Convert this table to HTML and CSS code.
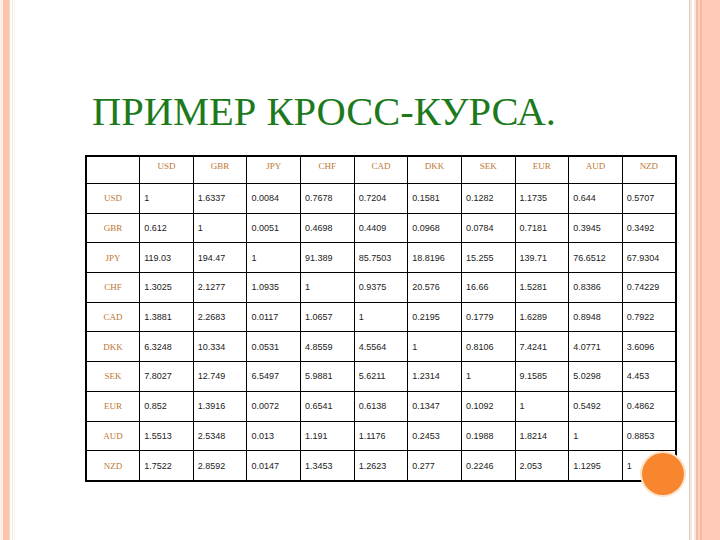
FILE: index.html
```html
<!DOCTYPE html>
<html lang="ru">
<head>
<meta charset="utf-8">
<title>Пример кросс-курса</title>
<link rel="stylesheet" href="styles.css">
</head>
<body>
<div class="slide">
  <h1 class="title">ПРИМЕР КРОСС-КУРСА.</h1>
  <div class="table-wrap">
    <table class="rates">
      <thead>
        <tr>
          <th></th><th>USD</th><th>GBR</th><th>JPY</th><th>CHF</th><th>CAD</th><th>DKK</th><th>SEK</th><th>EUR</th><th>AUD</th><th>NZD</th>
        </tr>
      </thead>
      <tbody>
        <tr><th>USD</th><td>1</td><td>1.6337</td><td>0.0084</td><td>0.7678</td><td>0.7204</td><td>0.1581</td><td>0.1282</td><td>1.1735</td><td>0.644</td><td>0.5707</td></tr>
        <tr><th>GBR</th><td>0.612</td><td>1</td><td>0.0051</td><td>0.4698</td><td>0.4409</td><td>0.0968</td><td>0.0784</td><td>0.7181</td><td>0.3945</td><td>0.3492</td></tr>
        <tr><th>JPY</th><td>119.03</td><td>194.47</td><td>1</td><td>91.389</td><td>85.7503</td><td>18.8196</td><td>15.255</td><td>139.71</td><td>76.6512</td><td>67.9304</td></tr>
        <tr><th>CHF</th><td>1.3025</td><td>2.1277</td><td>1.0935</td><td>1</td><td>0.9375</td><td>20.576</td><td>16.66</td><td>1.5281</td><td>0.8386</td><td>0.74229</td></tr>
        <tr><th>CAD</th><td>1.3881</td><td>2.2683</td><td>0.0117</td><td>1.0657</td><td>1</td><td>0.2195</td><td>0.1779</td><td>1.6289</td><td>0.8948</td><td>0.7922</td></tr>
        <tr><th>DKK</th><td>6.3248</td><td>10.334</td><td>0.0531</td><td>4.8559</td><td>4.5564</td><td>1</td><td>0.8106</td><td>7.4241</td><td>4.0771</td><td>3.6096</td></tr>
        <tr><th>SEK</th><td>7.8027</td><td>12.749</td><td>6.5497</td><td>5.9881</td><td>5.6211</td><td>1.2314</td><td>1</td><td>9.1585</td><td>5.0298</td><td>4.453</td></tr>
        <tr><th>EUR</th><td>0.852</td><td>1.3916</td><td>0.0072</td><td>0.6541</td><td>0.6138</td><td>0.1347</td><td>0.1092</td><td>1</td><td>0.5492</td><td>0.4862</td></tr>
        <tr><th>AUD</th><td>1.5513</td><td>2.5348</td><td>0.013</td><td>1.191</td><td>1.1176</td><td>0.2453</td><td>0.1988</td><td>1.8214</td><td>1</td><td>0.8853</td></tr>
        <tr><th>NZD</th><td>1.7522</td><td>2.8592</td><td>0.0147</td><td>1.3453</td><td>1.2623</td><td>0.277</td><td>0.2246</td><td>2.053</td><td>1.1295</td><td>1</td></tr>
      </tbody>
    </table>
    <span class="dot"></span>
  </div>
</div>
</body>
</html>
```

FILE: styles.css
```css
html, body {
  margin: 0;
  padding: 0;
}
body {
  width: 720px;
  height: 540px;
  overflow: hidden;
  background: #ffffff;
}
.slide {
  width: 720px;
  height: 540px;
  box-sizing: border-box;
  padding: 92px 0 0 85px;
  background:
    linear-gradient(to right,
      #fdeee8 0px, #fdeee8 3px,
      #fcc4ab 3px, #fcc4ab 9px,
      #f4d8d0 9px, #f4d8d0 10px,
      #ffffff 10px, #ffffff 12px,
      #efe9f4 12px, #efe9f4 13px,
      #ffffff 13px, #ffffff 14px,
      #fbf5de 14px, #fbf5de 15px,
      transparent 15px, transparent 689px,
      #e6cdbf 689px, #e6cdbf 690px,
      #f6e7de 690px, #f6e7de 692px,
      #ffffff 692px, #ffffff 694px,
      #f8e8d2 694px, #f8e8d2 696px,
      #f2bca6 696px, #f2bca6 698px,
      #ffd2c2 698px, #ffd2c2 700px,
      #f7b89f 700px, #f7b89f 702px,
      #ffcbb8 702px, #ffcbb8 720px);
}
.title {
  margin: 0 0 23px 7px;
  font-family: "Liberation Serif", serif;
  font-weight: normal;
  font-size: 40.5px;
  line-height: 40px;
  color: #1c7a1c;
  white-space: nowrap;
}
.table-wrap {
  position: relative;
  width: 592px;
}
.rates {
  width: 592px;
  table-layout: fixed;
  border-collapse: collapse;
  border: 2px solid #000;
  font-family: "Liberation Sans", sans-serif;
  font-size: 9px;
  color: #222;
}
.rates td, .rates th {
  border: 1px solid #000;
  padding: 0;
  height: 28.7px;
}
.rates td {
  text-align: left;
  padding-left: 4px;
  vertical-align: middle;
}
.rates th {
  font-family: "Liberation Serif", serif;
  font-weight: normal;
  font-size: 9px;
  color: #bb7630;
  text-align: center;
  vertical-align: middle;
}
.rates thead th {
  height: 22px;
  vertical-align: top;
  padding-top: 4px;
}
.dot {
  position: absolute;
  right: -7px;
  bottom: -13px;
  width: 42px;
  height: 42px;
  border-radius: 50%;
  background: #f7862f;
  box-shadow: 0 0 0 2px #fde2c8;
}
```
